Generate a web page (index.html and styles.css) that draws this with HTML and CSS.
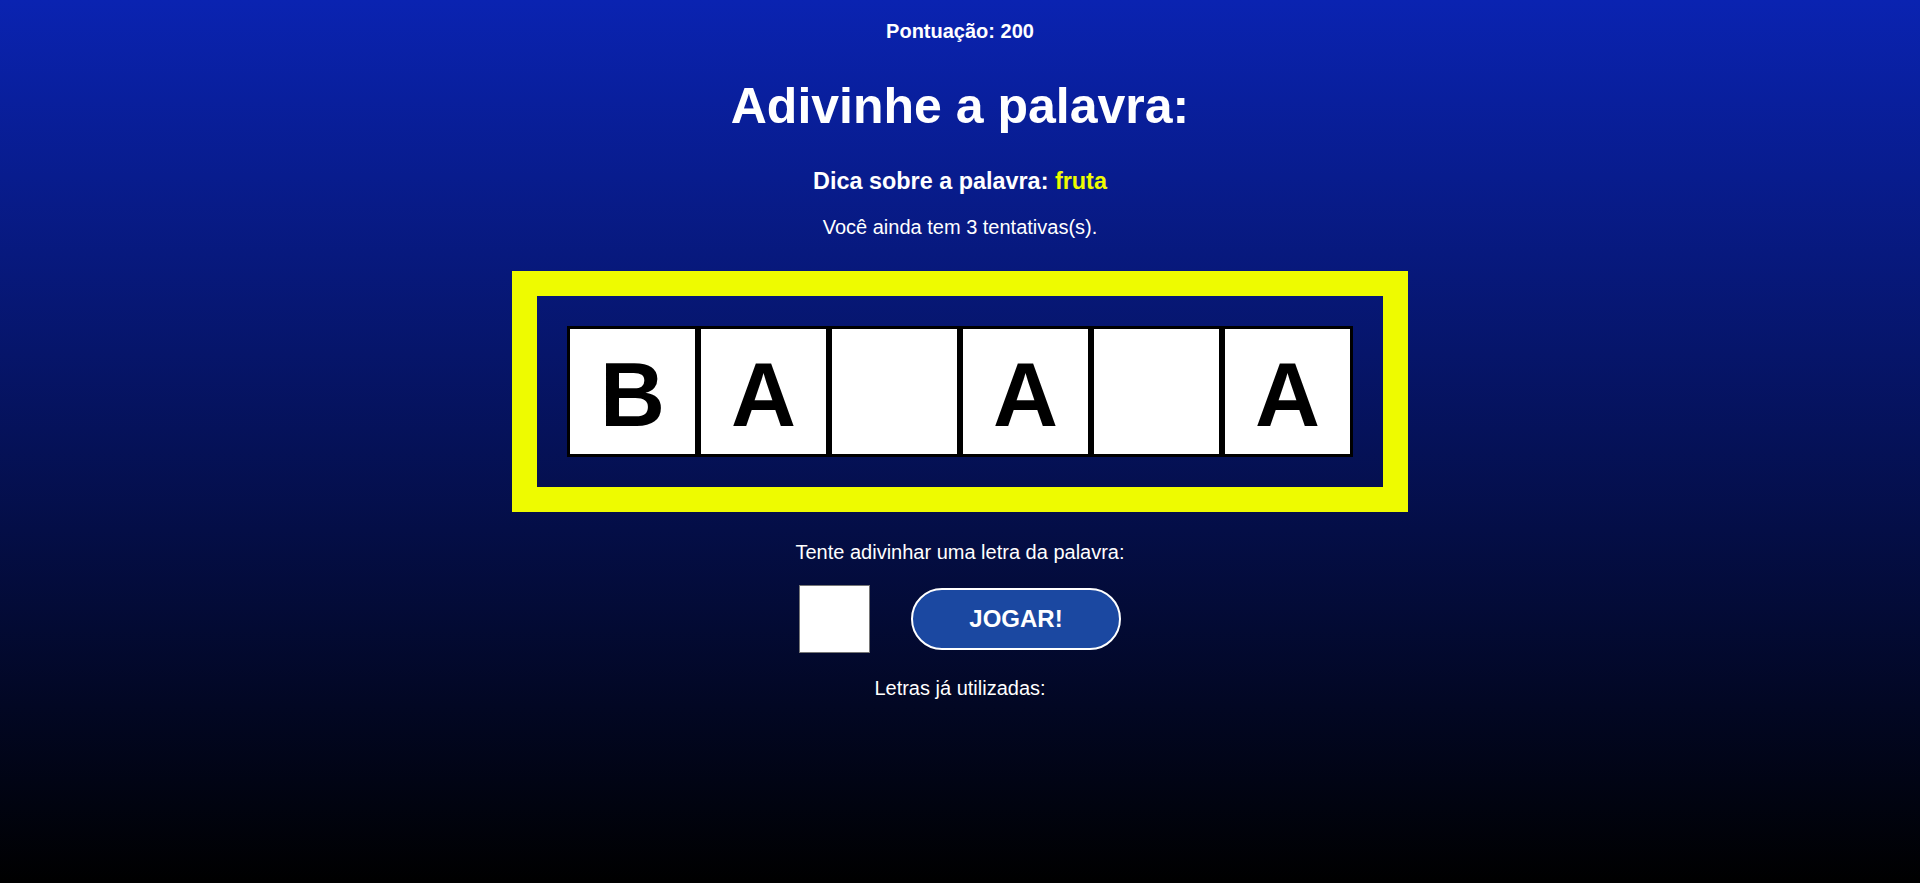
FILE: index.html
```html
<!DOCTYPE html>
<html lang="pt-BR">
<head>
<meta charset="utf-8">
<title>Adivinhe a palavra</title>
<link rel="stylesheet" href="styles.css">
</head>
<body>
<main class="game">
  <p class="score">Pontuação: 200</p>
  <h1 class="title">Adivinhe a palavra:</h1>
  <h3 class="hint">Dica sobre a palavra: <span class="hint-word">fruta</span></h3>
  <p class="tries">Você ainda tem 3 tentativas(s).</p>
  <div class="board">
    <div class="word">
      <div class="cell">B</div>
      <div class="cell">A</div>
      <div class="cell"></div>
      <div class="cell">A</div>
      <div class="cell"></div>
      <div class="cell">A</div>
    </div>
  </div>
  <p class="prompt">Tente adivinhar uma letra da palavra:</p>
  <div class="controls">
    <input class="letter-input" type="text" maxlength="1">
    <button class="play-btn" type="button">JOGAR!</button>
  </div>
  <p class="used">Letras já utilizadas:</p>
</main>
</body>
</html>
```
FILE: styles.css
```css
html {
  height: 100%;
}
body {
  margin: 0;
  min-height: 100%;
  background: linear-gradient(#0a23b1, #000000);
  color: #ffffff;
  font-family: "Liberation Sans", Arial, sans-serif;
  font-size: 20px;
}
.game {
  display: flex;
  flex-direction: column;
  align-items: center;
  text-align: center;
  padding-top: 20px;
}
.score {
  margin: 0;
  font-weight: bold;
}
.title {
  margin: 34px 0 0;
  font-size: 50px;
  font-weight: bold;
}
.hint {
  margin: 33px 0 0;
  font-size: 23.4px;
  font-weight: bold;
}
.hint-word {
  color: #eefc00;
}
.tries {
  margin: 21px 0 0;
}
.board {
  margin-top: 32px;
  border: 25px solid #eefb00;
  padding: 30px;
}
.word {
  display: flex;
}
.cell {
  box-sizing: border-box;
  width: 131px;
  height: 131px;
  border: 3px solid #000000;
  padding-top: 6px;
  background: #ffffff;
  color: #000000;
  font-size: 90px;
  font-weight: bold;
  display: flex;
  align-items: center;
  justify-content: center;
  line-height: 1;
}
.prompt {
  margin: 29px 0 0;
}
.controls {
  margin-top: 21px;
  display: flex;
  align-items: center;
  gap: 41px;
}
.letter-input {
  box-sizing: border-box;
  width: 71px;
  height: 68px;
  border: 1px solid #767676;
  background: #ffffff;
  font-family: "Liberation Sans", Arial, sans-serif;
  font-size: 40px;
  text-align: center;
  margin: 0;
  padding: 0;
}
.play-btn {
  box-sizing: border-box;
  width: 210px;
  height: 62px;
  border: 2px solid #ffffff;
  border-radius: 31px;
  background: #1b48a1;
  color: #ffffff;
  font-family: "Liberation Sans", Arial, sans-serif;
  font-size: 24px;
  font-weight: bold;
  margin: 0;
  padding: 0;
}
.used {
  margin: 24px 0 0;
}
```
